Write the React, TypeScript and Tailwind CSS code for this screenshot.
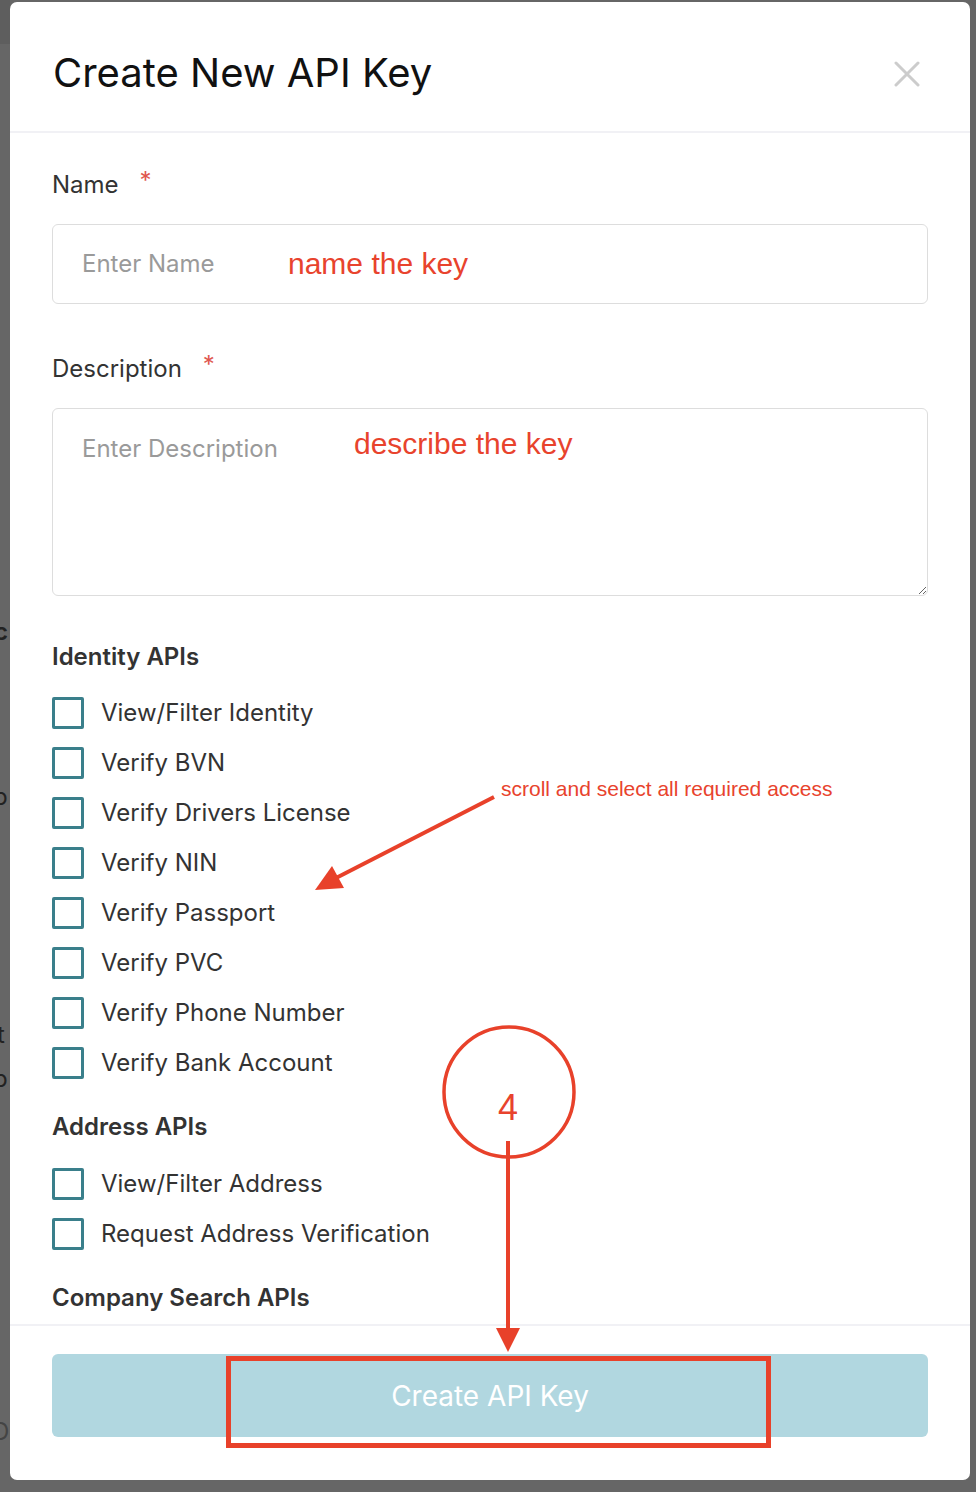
import React from "react"

const identityApis = [
  "View/Filter Identity",
  "Verify BVN",
  "Verify Drivers License",
  "Verify NIN",
  "Verify Passport",
  "Verify PVC",
  "Verify Phone Number",
  "Verify Bank Account",
]

const addressApis = ["View/Filter Address", "Request Address Verification"]

function CheckRow({ label }: { label: string }) {
  return (
    <label className="flex items-center gap-[17px] h-[32px]">
      <span className="w-[32px] h-[32px] shrink-0 border-[3px] border-[#3a7f8b] rounded-[2px] bg-white" />
      <span className="text-[24px] text-[#333333] leading-none">{label}</span>
    </label>
  )
}

function Required() {
  return <span className="text-[#e0574f] text-[24px] ml-[21px] relative top-[-4px]">*</span>
}

export default function App() {
  return (
    <div className="relative w-[976px] h-[1492px] bg-[#666666] overflow-hidden font-['Inter',sans-serif]">
      {/* bits of the page behind the backdrop */}
      <div className="absolute left-0 top-0 w-[10px] h-[44px] bg-[#5e5e5e]" />
      <div className="absolute left-0 top-[620px] text-[24px] font-semibold text-[#222] leading-none -translate-x-[6px]">c</div>
      <div className="absolute left-0 top-[785px] text-[24px] text-[#222] leading-none -translate-x-[7px]">p</div>
      <div className="absolute left-0 top-[1023px] text-[24px] text-[#222] leading-none -translate-x-[3px]">t</div>
      <div className="absolute left-0 top-[1067px] text-[24px] text-[#222] leading-none -translate-x-[7px]">p</div>
      <div className="absolute left-0 top-[1420px] text-[24px] text-[#444] leading-none -translate-x-[8px]">D</div>

      <div className="absolute left-[10px] top-[2px] w-[960px] h-[1478px] bg-white rounded-[7px] flex flex-col overflow-hidden">
        <div className="h-[131px] shrink-0 border-b-2 border-[#f1f1f5] flex items-center justify-between pl-[43px] pr-[50px] pt-[13px]">
          <h1 className="text-[40px] text-[#111111] leading-none">Create New API Key</h1>
          <svg width="26" height="26" viewBox="0 0 26 26" className="mt-[2px]">
            <path d="M2 2 L24 24 M24 2 L2 24" stroke="#cccccc" strokeWidth="3" strokeLinecap="round" />
          </svg>
        </div>

        <div className="flex-1 overflow-hidden px-[42px] pt-[35px]">
          <div className="text-[24px] leading-[33px] text-[#333333]">
            Name
            <Required />
          </div>
          <div className="relative mt-[23px] h-[80px] border border-[#dddddd] rounded-[6px] flex items-center pl-[29px]">
            <span className="text-[24px] text-[#9a9a9a]">Enter Name</span>
            <span className="absolute left-[235px] top-[22px] font-['Liberation_Sans',Arial,sans-serif] text-[30px] leading-[34px] text-[#e8432d]">
              name the key
            </span>
          </div>

          <div className="mt-[48px] text-[24px] leading-[33px] text-[#333333]">
            Description
            <Required />
          </div>
          <div className="relative mt-[23px]">
            <textarea
              placeholder="Enter Description"
              className="block w-full h-[188px] border border-[#dddddd] rounded-[6px] pl-[29px] pt-[23px] text-[24px] leading-[33px] placeholder:text-[#9a9a9a] outline-none"
            />
            <span className="absolute left-[302px] top-[19px] font-['Liberation_Sans',Arial,sans-serif] text-[30px] leading-[34px] text-[#e8432d]">
              describe the key
            </span>
          </div>

          <div className="mt-[44px] text-[24px] leading-[33px] font-semibold text-[#333333]">Identity APIs</div>
          <div className="mt-[24px] flex flex-col gap-[18px]">
            {identityApis.map((a) => (
              <CheckRow key={a} label={a} />
            ))}
          </div>

          <div className="mt-[31px] text-[24px] leading-[33px] font-semibold text-[#333333]">Address APIs</div>
          <div className="mt-[25px] flex flex-col gap-[18px]">
            {addressApis.map((a) => (
              <CheckRow key={a} label={a} />
            ))}
          </div>

          <div className="mt-[31px] text-[24px] leading-[33px] font-semibold text-[#333333]">Company Search APIs</div>
        </div>

        <div className="shrink-0 border-t-2 border-[#f1f1f5] px-[42px] pt-[28px] pb-[43px]">
          <button className="w-full h-[83px] rounded-[6px] bg-[#b1d7e0] text-white text-[28px]">Create API Key</button>
        </div>
      </div>

      {/* annotation layer */}
      <div className="absolute left-[501px] top-[776px] font-['Liberation_Sans',Arial,sans-serif] text-[21px] leading-[26px] text-[#e8432d] whitespace-nowrap">
        scroll and select all required access
      </div>
      <div className="absolute left-[498px] top-[1088px] font-['Liberation_Sans',Arial,sans-serif] text-[36px] leading-[40px] text-[#e8432d] font-light">
        4
      </div>
      <svg className="absolute left-0 top-0 pointer-events-none" width="976" height="1492" viewBox="0 0 976 1492">
        <line x1="494" y1="797" x2="336" y2="878" stroke="#e8412a" strokeWidth="4" />
        <polygon points="315,890 332,866 344,888" fill="#e8412a" />
        <circle cx="509" cy="1092" r="65" fill="none" stroke="#e8412a" strokeWidth="3.5" />
        <line x1="508" y1="1141" x2="508" y2="1332" stroke="#e8412a" strokeWidth="4" />
        <polygon points="496,1328 520,1328 508,1352" fill="#e8412a" />
        <rect x="228.5" y="1358.5" width="540" height="87" fill="none" stroke="#e8412a" strokeWidth="5" />
      </svg>
    </div>
  )
}
